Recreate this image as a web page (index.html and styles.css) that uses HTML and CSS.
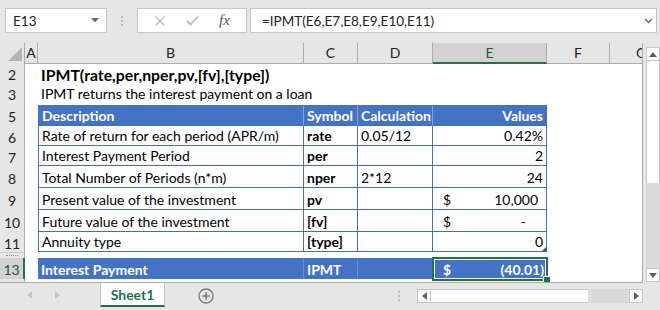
FILE: index.html
```html
<!DOCTYPE html>
<html>
  <head>
    <meta charset="utf-8">
    <title>IPMT</title>
    <link rel="stylesheet" href="styles.css">
  </head>
  <body>
    <div class="fbar">
      <div class="namebox">
        <span>E13</span>
        <svg width="8" height="5" viewBox="0 0 8 5"><path d="M0 0H8L4 4.5Z" fill="#6b6b6b"/></svg>
      </div>
      <div class="grip"><i></i><i></i><i></i></div>
      <div class="fbtns">
        <svg width="12" height="12" viewBox="0 0 12 12"><path d="M1.5 1.5L10.5 10.5M10.5 1.5L1.5 10.5" stroke="#b8b8b8" stroke-width="1.4"/></svg>
        <svg width="13" height="11" viewBox="0 0 13 11"><path d="M1 6L4.5 9.5L12 1.5" stroke="#b8b8b8" stroke-width="1.8" fill="none"/></svg>
        <span class="fx">fx</span>
      </div>
      <div class="finput">
        <span>=IPMT(E6,E7,E8,E9,E10,E11)</span>
        <svg width="9" height="6" viewBox="0 0 9 6"><path d="M1 1L4.5 4.5L8 1" stroke="#6b6b6b" stroke-width="1.5" fill="none"/></svg>
      </div>
    </div>

    <div class="book">
      <div class="sheet">
        <div class="row hdr">
          <div class="corner"><svg width="14" height="14" viewBox="0 0 14 14"><path d="M14 0V14H0Z" fill="#b4b4b4"/></svg></div>
          <div class="ch">A</div>
          <div class="ch">B</div>
          <div class="ch">C</div>
          <div class="ch">D</div>
          <div class="ch on">E</div>
          <div class="ch">F</div>
          <div class="ch">G</div>
        </div>

        <div class="row r2">
          <div class="rh">2</div><div></div>
          <div class="c title">IPMT(rate,per,nper,pv,[fv],[type])</div>
        </div>
        <div class="row r3">
          <div class="rh">3</div><div></div>
          <div class="c">IPMT returns the interest payment on a loan</div>
        </div>
        <div class="row r4"><div class="rh"></div></div>

        <div class="row r5">
          <div class="rh">5</div><div></div>
          <div class="t th first">Description</div>
          <div class="t th">Symbol</div>
          <div class="t th">Calculation</div>
          <div class="t th num">Values</div>
        </div>
        <div class="row r6">
          <div class="rh">6</div><div></div>
          <div class="t first">Rate of return for each period (APR/m)</div>
          <div class="t b">rate</div>
          <div class="t">0.05/12</div>
          <div class="t num">0.42%</div>
        </div>
        <div class="row r7">
          <div class="rh">7</div><div></div>
          <div class="t first">Interest Payment Period</div>
          <div class="t b">per</div>
          <div class="t"></div>
          <div class="t num">2</div>
        </div>
        <div class="row r8">
          <div class="rh">8</div><div></div>
          <div class="t first">Total Number of Periods (n*m)</div>
          <div class="t b">nper</div>
          <div class="t">2*12</div>
          <div class="t num">24</div>
        </div>
        <div class="row r9">
          <div class="rh">9</div><div></div>
          <div class="t first">Present value of the investment</div>
          <div class="t b">pv</div>
          <div class="t"></div>
          <div class="t acc"><span>$</span><span>10,000</span></div>
        </div>
        <div class="row r10">
          <div class="rh">10</div><div></div>
          <div class="t first">Future value of the investment</div>
          <div class="t b">[fv]</div>
          <div class="t"></div>
          <div class="t acc zero"><span>$</span><span>-</span></div>
        </div>
        <div class="row r11">
          <div class="rh">11</div><div></div>
          <div class="t first">Annuity type</div>
          <div class="t b">[type]</div>
          <div class="t"></div>
          <div class="t num flag">0</div>
        </div>
        <div class="row r12"><div class="rh"><i class="stub"></i></div></div>
        <div class="row r13">
          <div class="rh on">13</div><div></div>
          <div class="tot">Interest Payment</div>
          <div class="tot">IPMT</div>
          <div class="tot"></div>
          <div class="tot acc cur"><span>$</span><span>(40.01)</span></div>
        </div>
        <div class="row r14"><div class="rh"></div></div>
      </div>

      <div class="vscroll">
        <div class="sbtn"><svg width="8" height="5" viewBox="0 0 8 5"><path d="M0 5H8L4 0Z" fill="#606060"/></svg></div>
        <div class="vthumb"></div>
        <div class="vtrack"></div>
        <div class="sbtn"><svg width="8" height="5" viewBox="0 0 8 5"><path d="M0 0H8L4 5Z" fill="#606060"/></svg></div>
      </div>
    </div>

    <div class="tabs">
      <div class="nav">
        <svg width="5" height="8" viewBox="0 0 5 8"><path d="M5 0V8L0 4Z" fill="#c4c4c4"/></svg>
        <svg width="5" height="8" viewBox="0 0 5 8"><path d="M0 0V8L5 4Z" fill="#c4c4c4"/></svg>
      </div>
      <div class="tab">Sheet1</div>
      <svg class="add" width="16" height="16" viewBox="0 0 16 16">
        <circle cx="8" cy="8" r="7" stroke="#7a7a7a" stroke-width="1.3" fill="none"/>
        <path d="M8 4.2V11.8M4.2 8H11.8" stroke="#7a7a7a" stroke-width="1.6"/>
      </svg>
      <div class="grip hgrip"><i></i><i></i><i></i></div>
      <div class="hscroll">
        <div class="sbtn"><svg width="5" height="8" viewBox="0 0 5 8"><path d="M5 0V8L0 4Z" fill="#606060"/></svg></div>
        <div class="hthumb"></div>
        <div class="htrack"></div>
        <div class="sbtn"><svg width="5" height="8" viewBox="0 0 5 8"><path d="M0 0V8L5 4Z" fill="#606060"/></svg></div>
      </div>
    </div>
  </body>
</html>
```

FILE: styles.css
```css
* {
  box-sizing: border-box;
}
body {
  margin: 0;
  width: 660px;
  height: 310px;
  overflow: hidden;
  background: #e6e6e6;
  font-family: Lato, "Liberation Sans", sans-serif;
  color: #000;
}

/* formula bar */
.fbar {
  display: flex;
  align-items: flex-start;
  height: 43px;
  padding: 8px 3px 0 5px;
}
.namebox {
  width: 102px;
  height: 25px;
  background: #fff;
  border: 1px solid #c6c6c6;
  display: flex;
  align-items: center;
  justify-content: space-between;
  padding: 0 7px;
  font-size: 13.5px;
  color: #222;
}
.grip {
  width: 30px;
  height: 25px;
  display: flex;
  flex-direction: column;
  align-items: center;
  justify-content: center;
  gap: 2px;
}
.grip i {
  width: 2px;
  height: 2px;
  background: #b5b5b5;
}
.fbtns {
  width: 110px;
  height: 25px;
  background: #fff;
  border: 1px solid #c6c6c6;
  display: flex;
  align-items: center;
  padding-left: 16px;
  gap: 20px;
}
.fx {
  font-family: "Liberation Serif", serif;
  font-style: italic;
  font-size: 15px;
  color: #555;
}
.finput {
  flex: 1;
  margin-left: 3px;
  height: 25px;
  background: #fff;
  border: 1px solid #c6c6c6;
  display: flex;
  align-items: center;
  justify-content: space-between;
  padding: 0 3px 0 11px;
  font-size: 13.5px;
  color: #222;
}

/* sheet */
.book {
  display: flex;
  height: 240px;
}
.sheet {
  width: 643px;
  background: #fff;
  border-right: 1px solid #ababab;
  border-bottom: 1px solid #ababab;
  overflow: hidden;
}
.row {
  display: grid;
  grid-template-columns: 25px 13px 266px 54px 75px 114px 63px 63px;
}
.hdr { height: 20px; }
.r2 { height: 21px; }
.r3 { height: 19px; }
.r4 { height: 2px; }
.r5 { height: 21px; }
.r6, .r7, .r11 { height: 20px; }
.r8, .r9, .r10 { height: 22px; }
.r12 { height: 6px; }
.r13 { height: 21px; }
.r14 { height: 3px; }

.ch {
  background: #e6e6e6;
  border-right: 1px solid #ababab;
  border-bottom: 1px solid #ababab;
  text-align: center;
  font-size: 14px;
  line-height: 19px;
  color: #222;
}
.ch.on {
  background: #d2d2d2;
  border-bottom: 2px solid #217346;
  color: #1d5a36;
}
.corner {
  background: #e6e6e6;
  border-right: 1px solid #ababab;
  border-bottom: 1px solid #ababab;
  display: flex;
  align-items: flex-end;
  justify-content: flex-end;
  padding: 0 2px 2px 0;
}
.rh {
  background: #e6e6e6;
  border-right: 1px solid #ababab;
  font-size: 14px;
  color: #222;
  display: flex;
  align-items: center;
  justify-content: center;
  padding-top: 2px;
  overflow: hidden;
}
.r4 .rh {
  border-bottom: 1px solid #ababab;
}
.r12 .rh {
  padding-top: 0;
  align-items: flex-start;
  border-top: 1px solid #d0d0d0;
}
.stub {
  width: 12px;
  height: 2px;
  margin-top: 2px;
  border-top: 1px dotted #8a8a8a;
}
.rh.on {
  background: #d2d2d2;
  border-right: 2px solid #217346;
  color: #1d5a36;
}

.c {
  white-space: nowrap;
  padding: 0 3px;
  display: flex;
  align-items: flex-end;
  font-size: 14px;
  line-height: 18px;
}
.title {
  font-weight: bold;
  font-size: 15.8px;
}

/* table */
.t {
  position: relative;
  white-space: nowrap;
  padding: 0 3px;
  display: flex;
  align-items: flex-end;
  font-size: 14px;
  line-height: 18px;
  border-right: 1px solid #3f6fbf;
  border-bottom: 1px solid #3f6fbf;
}
.t.first {
  border-left: 1px solid #3f6fbf;
}
.r5 .t {
  border-top: 1px solid #3f6fbf;
}
.th {
  background: #4472c4;
  color: #fff;
  font-weight: bold;
  border-right-color: #86a3d9;
}
.th.num {
  border-right-color: #3f6fbf;
}
.th.first {
  border-left-color: #3f6fbf;
}
.b {
  font-weight: bold;
}
.num {
  justify-content: flex-end;
}
.acc {
  justify-content: space-between;
  padding: 0 8px 0 10px;
}
.acc.zero {
  padding-right: 20px;
}
.flag::after {
  content: "";
  position: absolute;
  right: 0;
  bottom: 0;
  border-left: 4px solid transparent;
  border-bottom: 4px solid #2f5597;
}

.tot {
  position: relative;
  white-space: nowrap;
  padding: 0 3px;
  display: flex;
  align-items: flex-end;
  font-size: 14px;
  line-height: 18px;
  background: #4472c4;
  color: #fff;
  font-weight: bold;
  border-right: 1px solid #6a8fd0;
}
.tot.acc {
  padding: 0 3px 0 10px;
  border-right: 0;
}
.cur::before {
  content: "";
  position: absolute;
  left: -1px;
  top: -1px;
  right: -1px;
  bottom: -2px;
  border: 2px solid #217346;
  box-shadow: inset 0 0 0 1px #fff;
}
.cur::after {
  content: "";
  position: absolute;
  right: -4px;
  bottom: -5px;
  width: 6px;
  height: 6px;
  background: #217346;
  border: 1px solid #fff;
}

/* scrollbars */
.vscroll {
  width: 17px;
  padding: 4px 0 0 3px;
  display: flex;
  flex-direction: column;
}
.sbtn {
  width: 14px;
  height: 14px;
  background: #fff;
  border: 1px solid #c6c6c6;
  display: flex;
  align-items: center;
  justify-content: center;
  flex: none;
}
.vthumb {
  height: 122px;
  background: #fff;
  border-left: 1px solid #c6c6c6;
  border-right: 1px solid #c6c6c6;
}
.vtrack {
  height: 85px;
  background: #dadada;
}

/* sheet tabs */
.tabs {
  display: flex;
  align-items: flex-start;
  height: 27px;
}
.nav {
  width: 100px;
  height: 24px;
  display: flex;
  align-items: center;
  padding-left: 27px;
  gap: 23px;
}
.tab {
  width: 65px;
  height: 24px;
  background: #fff;
  border-left: 1px solid #c6c6c6;
  border-right: 1px solid #c6c6c6;
  border-bottom: 2px solid #217346;
  color: #217346;
  font-weight: bold;
  font-size: 14px;
  display: flex;
  align-items: center;
  justify-content: center;
}
.add {
  margin: 5px 0 0 33px;
}
.hgrip {
  width: 2px;
  height: 14px;
  margin: 6px 0 0 184px;
}
.hscroll {
  margin: 6px 0 0 17px;
  width: 226px;
  height: 14px;
  display: flex;
}
.hthumb {
  width: 157px;
  background: #fff;
  border-top: 1px solid #c6c6c6;
  border-bottom: 1px solid #c6c6c6;
}
.htrack {
  flex: 1;
  background: #dadada;
}
```
